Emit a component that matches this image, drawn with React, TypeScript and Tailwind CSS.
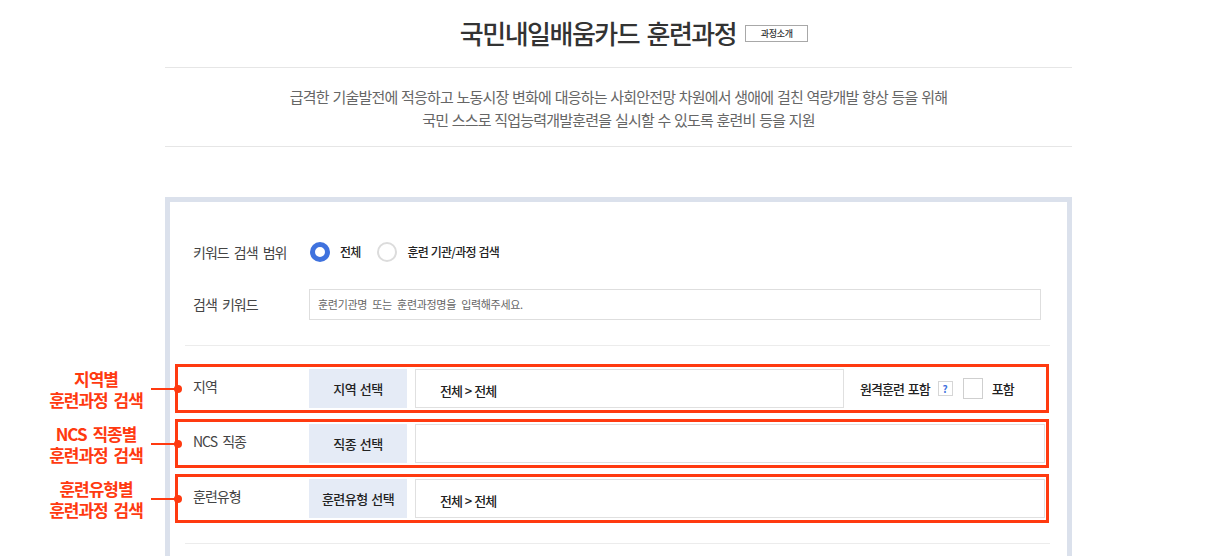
import React from 'react';

const font = { fontFamily: '"Noto Sans CJK KR", "Noto Sans", sans-serif' };

interface FilterRow {
  label: string;
  button: string;
  value: string;
  note: [string, string];
  remote?: boolean;
}

const filterRows: FilterRow[] = [
  { label: '지역', button: '지역 선택', value: '전체 > 전체', note: ['지역별', '훈련과정 검색'], remote: true },
  { label: 'NCS 직종', button: '직종 선택', value: '', note: ['NCS 직종별', '훈련과정 검색'] },
  { label: '훈련유형', button: '훈련유형 선택', value: '전체 > 전체', note: ['훈련유형별', '훈련과정 검색'] },
];

function Radio({ checked, label }: { checked?: boolean; label: string }) {
  return (
    <label className="flex items-center gap-[10px]">
      <span
        className={
          checked
            ? 'h-[20px] w-[20px] rounded-full border-[5px] border-[#3f72de] bg-white'
            : 'h-[20px] w-[20px] rounded-full border-2 border-[#dcdcdc] bg-white'
        }
      />
      <span className="text-[12px] font-medium tracking-[-0.8px] [word-spacing:1px] text-[#222]">{label}</span>
    </label>
  );
}

export default function App() {
  return (
    <div className="min-h-[556px] w-full overflow-hidden bg-white" style={font}>
      <div className="ml-[165px] w-[907px]">
        {/* Title */}
        <div className="flex items-center justify-center gap-[9px] pl-[31px] pt-[16px] pb-[17px]">
          <h1 className="text-[26px] leading-[34px] font-medium tracking-[-1.5px] [word-spacing:3px] text-[#333]">
            국민내일배움카드 훈련과정
          </h1>
          <span className="mt-[1px] flex h-[17px] w-[63px] items-center justify-center border border-[#a8a8a8] text-[9px] font-medium tracking-[-0.3px] text-[#333]">
            과정소개
          </span>
        </div>
        <div className="h-px bg-[#e6e6e6]" />

        {/* Description */}
        <div className="pt-[17px] pb-[15px] text-center text-[15px] leading-[23px] tracking-[-0.8px] [word-spacing:1px] text-[#666]">
          <p>급격한 기술발전에 적응하고 노동시장 변화에 대응하는 사회안전망 차원에서 생애에 걸친 역량개발 향상 등을 위해</p>
          <p>국민 스스로 직업능력개발훈련을 실시할 수 있도록 훈련비 등을 지원</p>
        </div>
        <div className="h-px bg-[#e6e6e6]" />

        {/* Search box */}
        <div className="mt-[50px] border-[5px] border-b-0 border-[#dbe1ec] bg-white pl-[5px] pr-[18px] pt-[35px] pb-[20px]">
          <div className="flex h-[30px] items-center pl-[18px]">
            <span className="w-[117px] text-[14px] tracking-[-1px] [word-spacing:3px] text-[#444]">키워드 검색 범위</span>
            <div className="flex items-center gap-[17px]">
              <Radio checked label="전체" />
              <Radio label="훈련 기관/과정 검색" />
            </div>
          </div>

          <div className="mt-[22px] flex h-[31px] items-center pl-[18px]">
            <span className="w-[116px] text-[14px] tracking-[-1px] [word-spacing:3px] text-[#444]">검색 키워드</span>
            <div className="flex h-[31px] w-[732px] items-center border border-[#dedede] pl-[8px] text-[11px] tracking-[-0.3px] [word-spacing:3px] text-[#666]">
              훈련기관명 또는 훈련과정명을 입력해주세요.
            </div>
          </div>

          <div className="ml-[10px] mr-[-1px] mt-[25px] h-px bg-[#ececec]" />

          <div className="mt-[18px] flex flex-col gap-[6px]">
            {filterRows.map((row) => (
              <div
                key={row.label}
                className="relative flex h-[49px] items-center border-[3px] border-[#ff3a10] pl-[15px] pr-px"
              >
                {/* Annotation */}
                <div className="absolute right-full top-0 bottom-0 flex items-center">
                  <div className="w-[110px] text-center text-[17px] font-semibold leading-[21px] tracking-[-1px] [word-spacing:3px] text-[#ff3a10]">
                    <p>{row.note[0]}</p>
                    <p>{row.note[1]}</p>
                  </div>
                  <div className="relative h-[2px] w-[27px] bg-[#ff3a10]">
                    <span className="absolute -right-[4px] -top-[3px] h-[8px] w-[8px] rounded-full bg-[#ff3a10]" />
                  </div>
                </div>

                <span className="w-[116px] pb-[5px] text-[14px] tracking-[-1px] [word-spacing:3px] text-[#444]">{row.label}</span>
                <div className="flex h-[39px] w-[98px] shrink-0 items-center justify-center bg-[#e5ebf6] text-[13px] font-medium tracking-[-0.5px] [word-spacing:1px] text-[#222]">
                  {row.button}
                </div>
                <div
                  className={
                    row.remote
                      ? 'ml-[8px] flex h-[39px] w-[429px] items-center border border-[#e0e0e0] pl-[24px] pt-[4px] text-[13px] font-medium tracking-[-1px] [word-spacing:1px] text-[#222]'
                      : 'ml-[8px] flex h-[39px] flex-1 items-center border border-[#e0e0e0] pl-[24px] pt-[4px] text-[13px] font-medium tracking-[-1px] [word-spacing:1px] text-[#222]'
                  }
                >
                  {row.value}
                </div>
                {row.remote && (
                  <div className="ml-[16px] flex items-center">
                    <span className="text-[13px] font-medium tracking-[-1px] [word-spacing:2px] text-[#222]">원격훈련 포함</span>
                    <span className="ml-[8px] flex h-[15px] w-[15px] items-center justify-center border border-[#d6d6d6] text-[10px] font-bold text-[#3f72de]">
                      ?
                    </span>
                    <span className="ml-[10px] h-[21px] w-[20px] border border-[#cfcfcf] bg-white" />
                    <span className="ml-[9px] text-[13px] font-medium tracking-[-1px] text-[#222]">포함</span>
                  </div>
                )}
              </div>
            ))}
          </div>

          <div className="ml-[10px] mr-[-1px] mt-[20px] h-px bg-[#ececec]" />
        </div>
      </div>
    </div>
  );
}
